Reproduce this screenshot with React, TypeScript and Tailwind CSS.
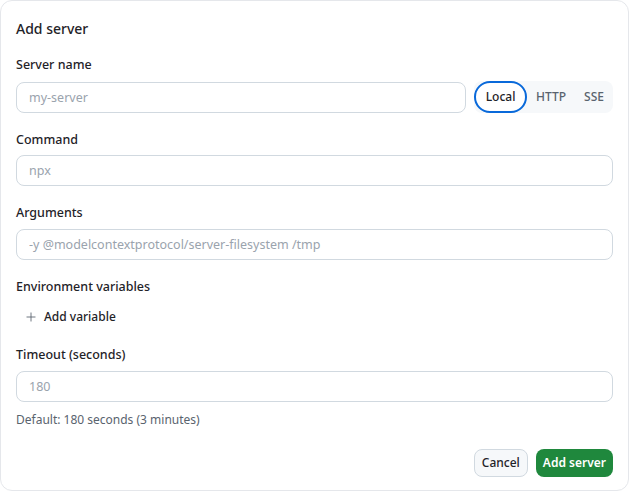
import { useState } from 'react';
import { Plus } from 'lucide-react';

type Transport = 'local' | 'http' | 'sse';

const TRANSPORTS: { id: Transport; label: string }[] = [
  { id: 'local', label: 'Local' },
  { id: 'http', label: 'HTTP' },
  { id: 'sse', label: 'SSE' },
];

const inputClass =
  'h-[31px] w-full rounded-lg border border-[#d1d9e0] bg-white px-3 text-[12.5px] text-[#1f2328] placeholder:text-[#9aa3ad] outline-none focus:border-[#0969da]';

function Label({ children }: { children: React.ReactNode }) {
  return <label className="block text-[12.5px] font-[550] leading-5 text-[#1f2328]">{children}</label>;
}

export default function App() {
  const [transport, setTransport] = useState<Transport>('local');

  return (
    <div className="h-[492px] w-[629px] bg-white font-['Noto_Sans','Open_Sans',sans-serif] text-[#1f2328]">
      <div className="flex h-[491px] w-[629px] flex-col rounded-xl border border-[#e5e7eb] bg-white px-[15px] pt-4">
        <h2 className="text-[14px] font-medium leading-6">Add server</h2>

        <div className="mt-[14px]">
          <Label>Server name</Label>
          <div className="mt-1.5 flex items-center gap-2">
            <input className={inputClass} placeholder="my-server" />
            <div className="flex h-8 shrink-0 items-center rounded-lg bg-[#f6f8fa] text-[12px] font-medium">
              {TRANSPORTS.map((t) =>
                transport === t.id ? (
                  <button
                    key={t.id}
                    onClick={() => setTransport(t.id)}
                    className="h-8 w-[53px] rounded-full border-2 border-[#0969da] bg-white text-[#1f2328]"
                  >
                    {t.label}
                  </button>
                ) : (
                  <button
                    key={t.id}
                    onClick={() => setTransport(t.id)}
                    className="h-8 px-[9px] text-[#59636e]"
                  >
                    {t.label}
                  </button>
                )
              )}
            </div>
          </div>
        </div>

        <div className="mt-[17px]">
          <Label>Command</Label>
          <input className={`${inputClass} mt-[5px]`} placeholder="npx" />
        </div>

        <div className="mt-[17px]">
          <Label>Arguments</Label>
          <input
            className={`${inputClass} mt-1.5`}
            placeholder="-y @modelcontextprotocol/server-filesystem /tmp"
          />
        </div>

        <div className="mt-[17px]">
          <Label>Environment variables</Label>
          <button className="mt-1.5 flex h-7 items-center gap-1.5 rounded-md px-2 text-[12px] font-medium text-[#1f2328]">
            <Plus className="h-3.5 w-3.5 text-[#59636e]" strokeWidth={1.5} />
            Add variable
          </button>
        </div>

        <div className="mt-[14px]">
          <Label>Timeout (seconds)</Label>
          <input className={`${inputClass} mt-1.5`} placeholder="180" />
          <p className="mt-2 text-[12px] leading-5 text-[#59636e]">Default: 180 seconds (3 minutes)</p>
        </div>

        <div className="mt-[19px] flex justify-end gap-2">
          <button className="h-7 rounded-lg border border-[#d1d9e0] bg-[#f6f8fa] px-[7px] text-[12px] font-medium text-[#1f2328]">
            Cancel
          </button>
          <button className="h-7 rounded-lg bg-[#1f883d] px-[7px] text-[12px] font-semibold text-white">
            Add server
          </button>
        </div>
      </div>
    </div>
  );
}
